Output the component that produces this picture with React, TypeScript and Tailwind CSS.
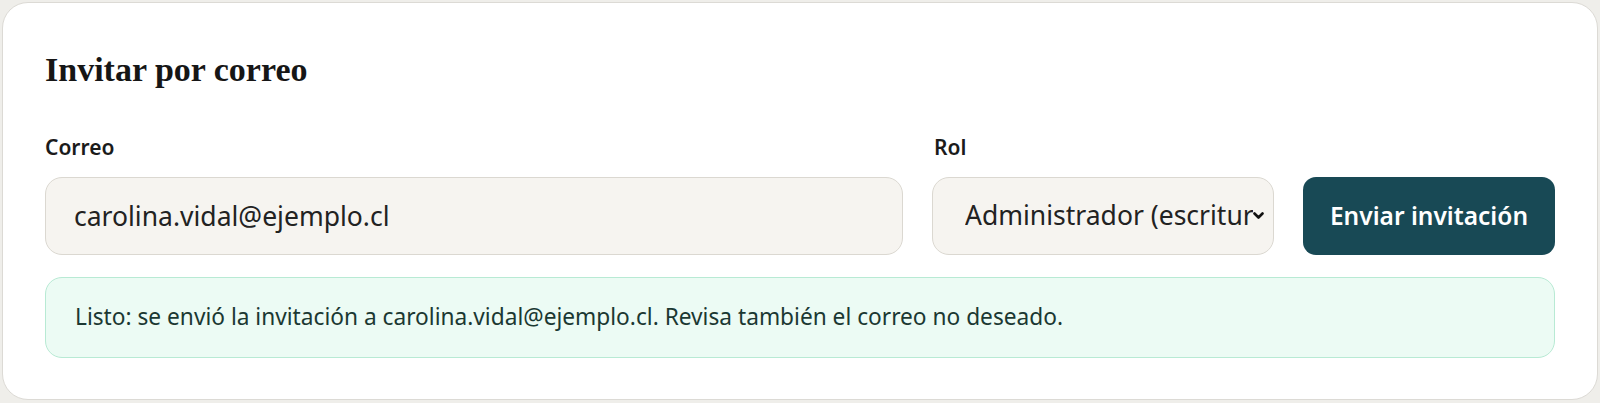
const sans = "font-['Noto_Sans',sans-serif]"

export default function App() {
  return (
    <div className="min-h-screen w-[1600px] bg-[#efeeea] px-[2px] pt-[2px] pb-[3px]">
      <section className="rounded-[26px] border border-[#dcdad5] bg-white px-[42px] pt-[42px] pb-[41px]">
        <h2 className="font-['Liberation_Serif',serif] text-[34px] font-bold leading-[50px] text-[#161616]">
          Invitar por correo
        </h2>

        <div className={`mt-[38px] flex items-end gap-[29px] ${sans}`}>
          {/* Correo */}
          <div className="flex flex-1 flex-col gap-[16px]">
            <label className="text-[21px] font-semibold leading-[28px] text-[#1b1b1b]">Correo</label>
            <input
              readOnly
              value="carolina.vidal@ejemplo.cl"
              className="h-[78px] rounded-[17px] border border-[#dbd8d1] bg-[#f6f4f0] px-[28px] text-[26.5px] text-[#222] outline-none"
            />
          </div>

          {/* Rol */}
          <div className="flex w-[342px] flex-col gap-[16px]">
            <label className="pl-[2px] text-[21px] font-semibold leading-[28px] text-[#1b1b1b]">Rol</label>
            <div className="relative">
              <select
                defaultValue="admin"
                className="h-[78px] w-full appearance-none rounded-[17px] border border-[#dbd8d1] bg-[#f6f4f0] pl-[32px] pr-[20px] text-[26.5px] text-[#222] outline-none"
              >
                <option value="admin">Administrador (escritura)</option>
                <option value="lector">Lector (solo lectura)</option>
              </select>
              <svg
                width="11"
                height="8"
                viewBox="0 0 11 8"
                className="pointer-events-none absolute right-[10px] top-1/2 -translate-y-1/2"
              >
                <polyline points="1.5,1.5 5.5,5.5 9.5,1.5" fill="none" stroke="#111" strokeWidth="2.6" strokeLinecap="round" strokeLinejoin="round" />
              </svg>
            </div>
          </div>

          <button className="h-[78px] w-[252px] rounded-[13px] bg-[#184955] text-[24.5px] font-semibold text-white">
            Enviar invitación
          </button>
        </div>

        <div className={`mt-[22px] flex h-[81px] items-center rounded-[17px] border border-[#b8ead4] bg-[#ecfbf4] px-[29px] ${sans}`}>
          <p className="text-[22.7px] text-[#1b3832]">
            Listo: se envió la invitación a carolina.vidal@ejemplo.cl. Revisa también el correo no deseado.
          </p>
        </div>
      </section>
    </div>
  )
}
